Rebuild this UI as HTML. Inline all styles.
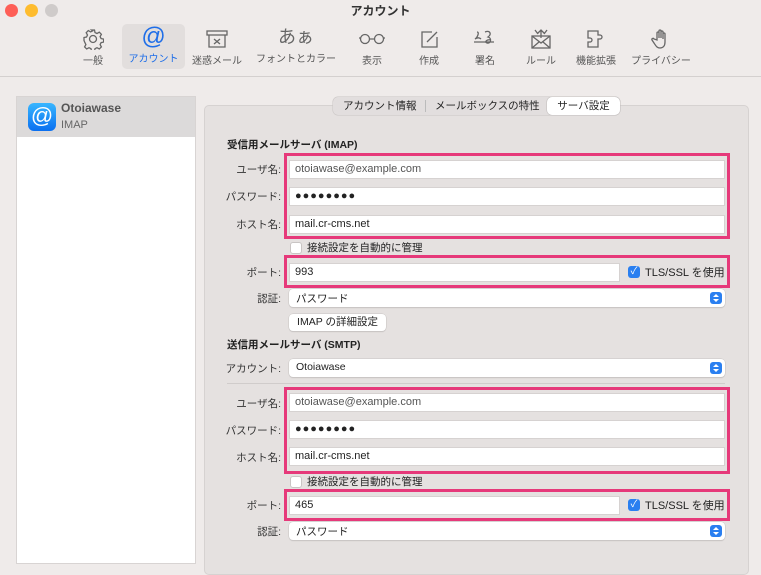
<!DOCTYPE html>
<html><head><meta charset="utf-8"><style>
*{margin:0;padding:0;box-sizing:border-box}
body{width:761px;height:564px;overflow:hidden;background:#efebea;font-family:"Liberation Sans","Noto Sans CJK JP",sans-serif;color:#222;position:relative;font-size:11px}
.a{position:absolute}
.dot{position:absolute;top:4px;width:13px;height:13px;border-radius:50%}
.tb{position:absolute;top:24px;height:45px;text-align:center;font-size:10px;color:#555}
.tb svg{display:block;margin:4px auto 2px}
.lab{position:absolute;width:83px;text-align:right;font-size:10.5px;color:#333}
.f{position:absolute;left:289px;width:436px;height:19px;background:#fff;border:1px solid #d6d2d1;font-size:11px;padding:2px 5px;color:#222}
.pk{position:absolute;left:284px;width:446px;border:3px solid #e6397a}
.sel{position:absolute;left:289px;width:436px;height:18px;background:#fff;border-radius:4px;box-shadow:0 0 0 .5px #c8c4c3,0 1px 1px rgba(0,0,0,.15);font-size:10.5px;padding:2px 7px}
.sel i{position:absolute;right:3px;top:3px;width:12px;height:12px;border-radius:3px;background:#2a7ff0}
.sel i:before{content:"";position:absolute;left:3px;top:2px;border:3px solid transparent;border-bottom:3px solid #fff;border-top:0}
.sel i:after{content:"";position:absolute;left:3px;top:7px;border:3px solid transparent;border-top:3px solid #fff;border-bottom:0}
.cb{position:absolute;width:12px;height:12px;border-radius:3px;background:#fff;border:1px solid #c9c5c4}
.ck{position:absolute;width:12px;height:12px;border-radius:3px;background:#2a7ff0;color:#fff;font-size:10px;line-height:12px;text-align:center}
</style></head><body>
<div class="dot" style="left:5px;background:#fe5f57"></div>
<div class="dot" style="left:25px;background:#febc2e"></div>
<div class="dot" style="left:45px;background:#cfcbca"></div>
<div class="a" style="left:0;width:761px;top:2px;text-align:center;font-size:12px;font-weight:bold;color:#333">アカウント</div>

<div class="a" style="left:122px;top:24px;width:63px;height:45px;background:#e2dedd;border-radius:5px"></div>
<div class="tb" style="left:63px;width:60px"><svg width="22" height="22" viewBox="0 0 22 22" fill="none" stroke="#666" stroke-width="1.3"><circle cx="11" cy="11" r="3.5"/><path d="M9.5 2h3l.5 2.5 2 1 2.3-1.3 2.1 2.1-1.3 2.3 1 2 2.5.5v3l-2.5.5-1 2 1.3 2.3-2.1 2.1-2.3-1.3-2 1-.5 2.5h-3l-.5-2.5-2-1-2.3 1.3-2.1-2.1 1.3-2.3-1-2L2 12.5v-3l2.5-.5 1-2-1.3-2.3 2.1-2.1 2.3 1.3 2-1z"/></svg>一般</div>
<div class="tb" style="left:122px;width:63px;color:#1f6ee8"><div style="font-size:24px;line-height:26px;margin-top:0">@</div>アカウント</div>
<div class="tb" style="left:187px;width:60px"><svg width="24" height="22" viewBox="0 0 24 22" fill="none" stroke="#666" stroke-width="1.3"><rect x="2" y="3" width="20" height="4"/><path d="M4 7v12h16V7M9 11l6 5M15 11l-6 5"/></svg>迷惑メール</div>
<div class="tb" style="left:251px;width:90px"><div style="font-size:18px;line-height:26px;color:#666">あぁ</div>フォントとカラー</div>
<div class="tb" style="left:347px;width:50px"><svg width="28" height="22" viewBox="0 0 28 22" fill="none" stroke="#666" stroke-width="1.3"><circle cx="7" cy="11" r="4.5"/><circle cx="21" cy="11" r="4.5"/><path d="M11.5 11h5M1 10h1.5M25.5 10H27"/></svg>表示</div>
<div class="tb" style="left:409px;width:40px"><svg width="22" height="22" viewBox="0 0 22 22" fill="none" stroke="#666" stroke-width="1.3"><path d="M14 4H4v15h15V9M9 14l10-10"/></svg>作成</div>
<div class="tb" style="left:463px;width:44px"><svg width="28" height="22" viewBox="0 0 28 22" fill="none" stroke="#666" stroke-width="1.3"><path d="M3 14h20M6 4c3 0 0 6-2 7 3-2 5-1 6 0M14 4c5-2 7 2 3 5 4 1 3 7-1 6-3-1 0-4 4-3"/></svg>署名</div>
<div class="tb" style="left:520px;width:42px"><svg width="24" height="22" viewBox="0 0 24 22" fill="none" stroke="#666" stroke-width="1.3"><rect x="3" y="8" width="18" height="12"/><path d="M3 8l9 7 9-7M3 20l7-6M21 20l-7-6M12 10V2M9 5l3-3 3 3M6 2l3 4M18 2l-3 4"/></svg>ルール</div>
<div class="tb" style="left:571px;width:50px"><svg width="24" height="22" viewBox="0 0 24 22" fill="none" stroke="#666" stroke-width="1.3"><path d="M4 3h10v4h2a2 2 0 010 4h-2v8H4v-5h2a2 2 0 000-4H4z"/></svg>機能拡張</div>
<div class="tb" style="left:628px;width:66px"><svg width="22" height="22" viewBox="0 0 22 22" fill="none" stroke="#666" stroke-width="1.3"><path d="M7 12V5a1 1 0 012 0v5V3a1 1 0 012 0v7V4a1 1 0 012 0v7V6a1 1 0 012 0v8c0 4-2 6-5 6s-4-2-6-5l-2-3a1 1 0 012-1z"/></svg>プライバシー</div>
<div class="a" style="left:0;top:76px;width:761px;height:1px;background:#d4d0cf"></div>

<div class="a" style="left:16px;top:96px;width:180px;height:468px;background:#fff;border:1px solid #d8d4d3"></div>
<div class="a" style="left:17px;top:97px;width:178px;height:40px;background:#dcdada"></div>
<div class="a" style="left:28px;top:103px;width:28px;height:28px;border-radius:6px;background:linear-gradient(#38b6ff,#0a6ff0);color:#fff;font-size:22px;line-height:26px;text-align:center">@</div>
<div class="a" style="left:61px;top:101px;font-size:12px;font-weight:bold;color:#555">Otoiawase</div>
<div class="a" style="left:61px;top:119px;font-size:11px;color:#666">IMAP</div>

<div class="a" style="left:204px;top:105px;width:545px;height:470px;background:#e5e1e0;border:1px solid #d6d2d1;border-radius:5px"></div>
<div class="a" style="left:333px;top:97px;width:287px;height:18px;background:#e2dede;border-radius:5px;box-shadow:0 0 0 .5px #c9c5c4;font-size:10.5px;line-height:18px;color:#222">
<span class="a" style="left:10px">アカウント情報</span><span class="a" style="left:92px;top:3px;width:1px;height:12px;background:#bbb"></span><span class="a" style="left:102px">メールボックスの特性</span>
<span class="a" style="left:214px;top:0;width:73px;height:18px;background:#fff;border-radius:5px;box-shadow:0 0 0 .5px #c0bcbb;text-align:center">サーバ設定</span></div>

<div class="a" style="left:227px;top:137px;font-size:10.5px;font-weight:bold">受信用メールサーバ (IMAP)</div>
<div class="pk" style="top:153px;height:86px"></div>
<div class="lab" style="left:198px;top:162px">ユーザ名:</div><div class="f" style="top:160px;color:#555">otoiawase@example.com</div>
<div class="lab" style="left:198px;top:189px">パスワード:</div><div class="f" style="top:187px;letter-spacing:1px">●●●●●●●●</div>
<div class="lab" style="left:198px;top:217px">ホスト名:</div><div class="f" style="top:215px">mail.cr-cms.net</div>
<div class="cb" style="left:290px;top:242px"></div><div class="a" style="left:307px;top:240px;font-size:10.5px">接続設定を自動的に管理</div>
<div class="pk" style="top:255px;height:33px"></div>
<div class="lab" style="left:198px;top:265px">ポート:</div><div class="f" style="top:263px;width:331px">993</div>
<div class="ck" style="left:628px;top:266px">✓</div><div class="a" style="left:645px;top:264px;font-size:11px">TLS/SSL を使用</div>
<div class="lab" style="left:198px;top:291px">認証:</div><div class="sel" style="top:289px">パスワード<i></i></div>
<div class="a" style="left:289px;top:314px;width:97px;height:17px;background:#fff;border-radius:4px;box-shadow:0 0 0 .5px #c8c4c3,0 1px 1px rgba(0,0,0,.15);font-size:10.5px;line-height:17px;text-align:center">IMAP の詳細設定</div>

<div class="a" style="left:227px;top:337px;font-size:10.5px;font-weight:bold">送信用メールサーバ (SMTP)</div>
<div class="lab" style="left:198px;top:361px">アカウント:</div><div class="sel" style="top:359px">Otoiawase<i></i></div>
<div class="a" style="left:227px;top:383px;width:498px;height:1px;background:#d0cccb"></div>
<div class="pk" style="top:387px;height:87px"></div>
<div class="lab" style="left:198px;top:396px">ユーザ名:</div><div class="f" style="top:393px;color:#555">otoiawase@example.com</div>
<div class="lab" style="left:198px;top:423px">パスワード:</div><div class="f" style="top:420px;letter-spacing:1px">●●●●●●●●</div>
<div class="lab" style="left:198px;top:450px">ホスト名:</div><div class="f" style="top:447px">mail.cr-cms.net</div>
<div class="cb" style="left:290px;top:476px"></div><div class="a" style="left:307px;top:474px;font-size:10.5px">接続設定を自動的に管理</div>
<div class="pk" style="top:489px;height:32px"></div>
<div class="lab" style="left:198px;top:498px">ポート:</div><div class="f" style="top:496px;width:331px">465</div>
<div class="ck" style="left:628px;top:499px">✓</div><div class="a" style="left:645px;top:497px;font-size:11px">TLS/SSL を使用</div>
<div class="lab" style="left:198px;top:524px">認証:</div><div class="sel" style="top:522px">パスワード<i></i></div>
</body></html>
